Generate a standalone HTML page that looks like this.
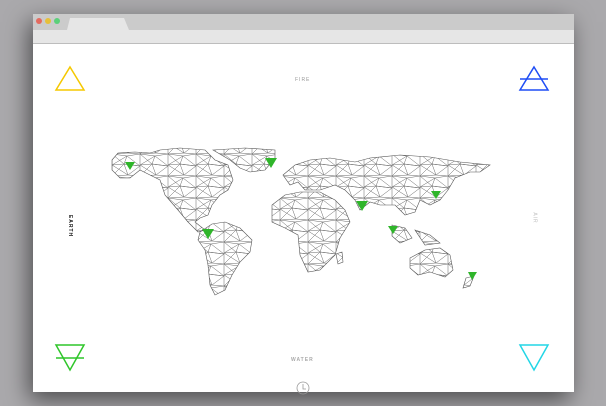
<!DOCTYPE html>
<html><head><style>
html,body{margin:0;padding:0}
body{width:606px;height:406px;background:#aaa9ac;position:relative;overflow:hidden;font-family:"Liberation Sans",sans-serif}
.win{position:absolute;left:33px;top:14px;width:541px;height:378px;background:#fff;box-shadow:-4px 8px 22px rgba(0,0,0,.55);overflow:hidden}
.tb{position:absolute;left:0;top:0;width:100%;height:16px;background:#cbcbcb}
.tab{position:absolute;left:34px;top:4px;width:62px;height:12px;background:#e6e6e6;clip-path:polygon(3px 0,57px 0,100% 100%,0 100%)}
.bar{position:absolute;left:0;top:16px;width:100%;height:13px;background:#e6e6e6;border-bottom:1px solid #bdbdbd}
.dot{position:absolute;top:4px;width:6px;height:6px;border-radius:50%}
.lbl{position:absolute;font-size:5px;letter-spacing:1px;color:#999}
</style></head><body>
<div class="win">
<div class="tb"></div><div class="tab"></div><div class="bar"></div>
<div class="dot" style="left:3px;background:#e46a5f"></div>
<div class="dot" style="left:12px;background:#e6c03a"></div>
<div class="dot" style="left:21px;background:#5bd07a"></div>
</div>
<div class="lbl" style="left:295px;top:77px">FIRE</div>
<div class="lbl" style="left:291px;top:357px;color:#aaa;font-weight:bold">WATER</div>
<div class="lbl" style="left:59px;top:223px;transform:rotate(90deg);color:#111;font-weight:bold">EARTH</div>
<div class="lbl" style="left:529px;top:215px;transform:rotate(90deg);color:#bbb">AIR</div>
<svg width="606" height="406" style="position:absolute;left:0;top:0">
<defs>
<pattern id="tri" width="28" height="22" patternUnits="userSpaceOnUse">
<path d="M0 0L15 2L28 0M0 11L12 10L28 12M0 22L16 21L28 22M0 0L12 10L16 21M15 2L12 10L28 12L16 21M15 2L28 12M0 11L16 21M0 0V22M28 0V22M0 11L15 2M12 10L0 22" stroke="#666" stroke-width="0.5" fill="none"/>
</pattern>
</defs>
<g fill="url(#tri)" stroke="#555" stroke-width="0.6">
<polygon points="112,160 118,153 135,152 150,153 160,150 180,148 205,150 215,160 228,165 233,180 228,190 220,195 212,205 208,215 200,218 195,222 205,230 198,232 188,222 178,210 165,195 160,180 150,175 140,170 130,178 120,178 112,170"/>
<polygon points="213,150 245,148 275,150 275,158 265,170 250,172 240,168 230,160"/>
<polygon points="200,232 212,224 225,222 240,228 252,240 250,252 240,262 232,275 225,290 215,295 210,285 208,265 205,250 198,240"/>
<polygon points="283,175 295,165 310,160 330,158 355,162 370,158 400,155 430,157 460,162 490,165 480,172 470,172 455,178 448,190 440,200 430,205 420,200 415,212 405,215 395,205 380,205 370,202 360,210 355,200 345,190 335,185 320,190 305,190 298,182 290,185"/>
<polygon points="272,205 285,195 300,192 320,192 335,200 345,210 350,222 340,238 335,255 320,270 308,272 300,255 298,235 285,228 272,222"/>
<polygon points="336,254 342,252 343,262 338,264"/>
<polygon points="392,225 405,228 412,238 400,243 392,236"/>
<polygon points="415,230 430,235 440,243 425,245"/>
<polygon points="410,258 425,250 440,248 450,255 453,270 445,277 430,272 418,275 410,268"/>
<polygon points="466,278 474,276 470,286 463,288"/>
</g>
<g fill="#2fb52a">
<polygon points="125,162 135,162 130,170"/>
<polygon points="265,158 277,158 271,168"/>
<polygon points="202,229 214,229 208,239"/>
<polygon points="356,201 368,201 362,211"/>
<polygon points="388,226 398,226 393,234"/>
<polygon points="431,191 441,191 436,199"/>
<polygon points="468,272 477,272 472,280"/>
</g>
<g fill="none" stroke-width="1.5">
<polygon points="70,67 84,90 56,90" stroke="#f5c800"/>
<polygon points="534,67 548,90 520,90" stroke="#1e4df5"/>
<line x1="520" y1="79" x2="548" y2="79" stroke="#1e4df5"/>
<polygon points="56,345 84,345 70,370" stroke="#2fc62a"/>
<line x1="56" y1="358" x2="84" y2="358" stroke="#2fc62a"/>
<polygon points="520,345 548,345 534,370" stroke="#22d6e6"/>
<circle cx="303" cy="388" r="6" stroke="#999" stroke-width="0.8"/>
<path d="M303 384V389H306" stroke="#999" stroke-width="0.8"/>
</g>
</svg>
</body></html>
